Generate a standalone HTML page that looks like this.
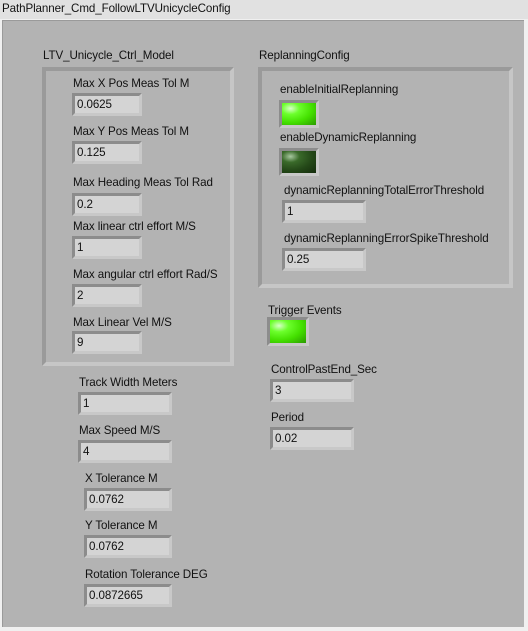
<!DOCTYPE html>
<html><head><style>
body{margin:0;width:528px;height:631px;background:#f0f0f0;position:relative;overflow:hidden;font-family:"Liberation Sans",sans-serif;font-size:11.6px;letter-spacing:-0.1px;color:#111}
#t{position:absolute;left:0;top:0;width:528px;height:19px;background:#e1e1e1;line-height:18px;padding-left:2px;box-sizing:border-box}
#p{position:absolute;left:2px;top:20px;width:522px;height:607px;background:#b3b3b3;border-top:1px solid #9a9a9a;border-left:1px solid #9a9a9a;box-sizing:border-box}
.l{position:absolute;white-space:nowrap;line-height:14px}
.b{position:absolute;height:23px;box-sizing:border-box;background:#d4d4d4;border:3px solid;border-color:#8c8c8c #c8c8c8 #c8c8c8 #8c8c8c;line-height:17px;padding-left:2px}
.c{position:absolute;box-sizing:border-box;border:4px solid;border-color:#9a9a9a #c6c6c6 #c6c6c6 #9a9a9a}
.led{position:absolute;width:40px;height:28px;box-sizing:border-box;border:3px solid;border-color:#8c8c8c #c8c8c8 #c8c8c8 #8c8c8c}
.on{background:radial-gradient(ellipse at 25% 25%,#d8ffc8 0,#6cff2c 25%,#44e000 60%,#2a9a00 100%)}
.off{background:radial-gradient(ellipse at 25% 25%,#a8c8a0 0,#3a6a2a 25%,#244818 60%,#142c0c 100%)}
</style></head><body>
<div id="t">PathPlanner_Cmd_FollowLTVUnicycleConfig</div>
<div id="p"></div>
<div class="c" style="left:42px;top:67px;width:192px;height:299px"></div>
<div class="c" style="left:258px;top:67px;width:255px;height:221px"></div>
<div class="l" style="left:43px;top:49px">LTV_Unicycle_Ctrl_Model</div>
<div class="l" style="left:73px;top:77px">Max X Pos Meas Tol M</div><div class="b" style="left:72px;top:93px;width:70px">0.0625</div>
<div class="l" style="left:73px;top:125px">Max Y Pos Meas Tol M</div><div class="b" style="left:72px;top:141px;width:70px">0.125</div>
<div class="l" style="left:73px;top:176px">Max Heading Meas Tol Rad</div><div class="b" style="left:72px;top:193px;width:70px">0.2</div>
<div class="l" style="left:73px;top:220px">Max linear ctrl effort M/S</div><div class="b" style="left:72px;top:236px;width:70px">1</div>
<div class="l" style="left:73px;top:268px">Max angular ctrl effort Rad/S</div><div class="b" style="left:72px;top:284px;width:70px">2</div>
<div class="l" style="left:73px;top:316px">Max Linear Vel M/S</div><div class="b" style="left:72px;top:331px;width:70px">9</div>
<div class="l" style="left:79px;top:376px">Track Width Meters</div><div class="b" style="left:78px;top:392px;width:94px">1</div>
<div class="l" style="left:79px;top:424px">Max Speed M/S</div><div class="b" style="left:78px;top:440px;width:94px">4</div>
<div class="l" style="left:85px;top:472px">X Tolerance M</div><div class="b" style="left:84px;top:488px;width:88px">0.0762</div>
<div class="l" style="left:85px;top:519px">Y Tolerance M</div><div class="b" style="left:84px;top:535px;width:88px">0.0762</div>
<div class="l" style="left:85px;top:568px">Rotation Tolerance DEG</div><div class="b" style="left:84px;top:584px;width:88px">0.0872665</div>
<div class="l" style="left:259px;top:49px">ReplanningConfig</div>
<div class="l" style="left:280px;top:83px">enableInitialReplanning</div><div class="led on" style="left:279px;top:100px"></div>
<div class="l" style="left:280px;top:131px">enableDynamicReplanning</div><div class="led off" style="left:279px;top:148px"></div>
<div class="l" style="left:284px;top:184px">dynamicReplanningTotalErrorThreshold</div><div class="b" style="left:282px;top:200px;width:84px">1</div>
<div class="l" style="left:284px;top:232px">dynamicReplanningErrorSpikeThreshold</div><div class="b" style="left:282px;top:248px;width:84px">0.25</div>
<div class="l" style="left:268px;top:304px">Trigger Events</div><div class="led on" style="left:267px;top:317px;width:42px;height:29px"></div>
<div class="l" style="left:271px;top:363px">ControlPastEnd_Sec</div><div class="b" style="left:270px;top:379px;width:84px">3</div>
<div class="l" style="left:271px;top:411px">Period</div><div class="b" style="left:270px;top:427px;width:84px">0.02</div>
</body></html>
